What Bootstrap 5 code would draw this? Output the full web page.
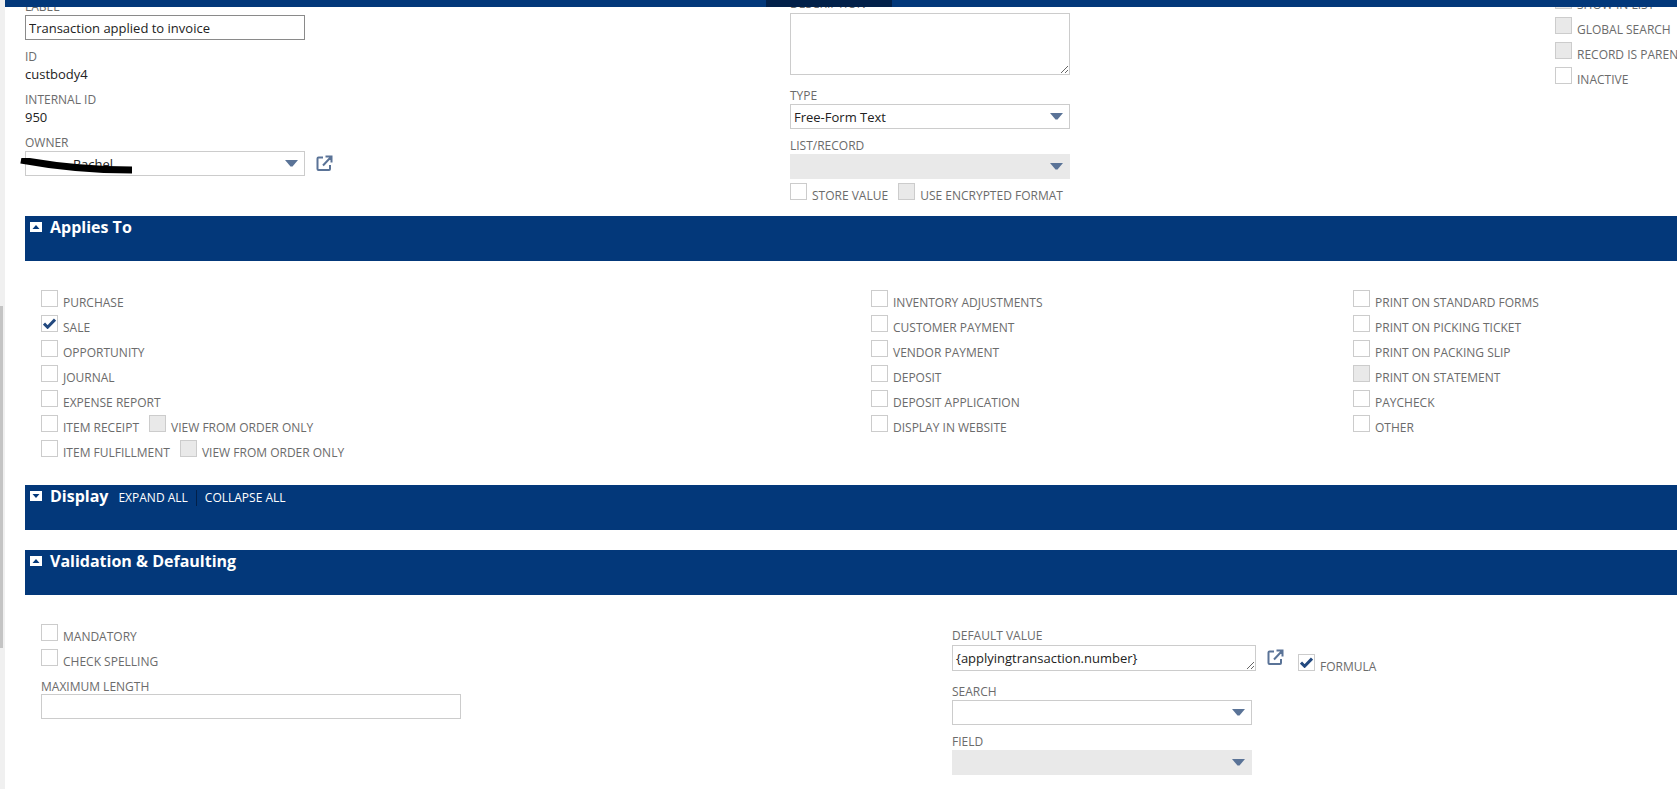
<!DOCTYPE html>
<html lang="en"><head>
<meta charset="UTF-8" />
<meta name="viewport" content="width=device-width, initial-scale=1" />
<title>Transaction Body Field</title>
<link href="https://cdn.jsdelivr.net/npm/bootstrap@5.3.3/dist/css/bootstrap.min.css" rel="stylesheet" />
<style>
  html, body { height: 100%; overflow: hidden; }
  body { font-family: "Open Sans", "Liberation Sans", sans-serif; font-size: 13px; color: #222; background: #fff; }
  .page-wrap { height: 789px; overflow: hidden; }
  .side-gutter { width: 5px; flex: none; background: #f0f0f0; }
  .side-thumb { width: 3px; height: 342px; margin-top: 306px; background: #c4c4c4; }
  .top-strip { position: relative; z-index: 2; height: 7px; background: #03387a; padding-left: 761px; }
  .top-tab { width: 126px; height: 7px; background: #022049; }
  .page-main { min-width: 0; flex: 1; overflow: hidden; }
  .top-fields { height: 216px; margin-top: -7px; padding-left: 20px; }
  .col-left { width: 765px; flex: none; }
  .col-mid { width: 765px; flex: none; margin-top: -2px; }
  .col-right { flex: none; margin-top: -8px; }
  .fld-label { display: block; height: 15px; margin: 0; font-size: 12px; line-height: 15px; color: #6b6b6b; text-transform: uppercase; white-space: nowrap; }
  .fld-value { height: 18px; line-height: 18px; margin: 1px 0 9px; }
  .fld-label.clip-one { margin: -1px 0 1px; }
  .fld-label.clip-two { margin: -2px 0 2px; }
  .fld-label.gap-a { margin-top: 9px; }
  .gap-owner { margin-top: 1px; }
  .fld-label.gap-type { margin: 13px 0 1px; }
  .fld-label.gap-list { margin: 9px 0 1px; }
  .gap-store { margin-top: 4px; }
  .ns-input.form-control, .ns-select.form-select { height: 25px; min-height: 25px; padding: 1px 3px 0; border: 1px solid #ccc; border-radius: 0; font-size: 13px; line-height: 22px; color: #222; box-shadow: none; }
  .ns-input.dark-edge { border-color: #8a8a8a; }
  .ns-select.form-select { background-image: url("data:image/svg+xml,%3Csvg xmlns='http://www.w3.org/2000/svg' width='13' height='7'%3E%3Cpath d='M0 0h13L7.5 6.5h-2z' fill='%235a7397'/%3E%3C/svg%3E"); background-size: 13px 7px; background-position: right 6px center; }
  .ns-select.form-select:disabled { background-color: #e9e9e9; border-color: #e9e9e9; }
  .ns-select.owner-select.form-select { padding-left: 47px; }
  textarea.ns-input.form-control { resize: both; }
  .w-280 { width: 280px; }
  .w-300 { width: 300px; }
  .w-304 { width: 304px; height: 26px !important; }
  .w-420 { width: 420px; }
  .desc-area.form-control { height: 62px; }
  .check-row { height: 25px; display: flex; align-items: flex-start; white-space: nowrap; }
  .ns-check.form-check-input { width: 17px; height: 17px; margin: 0; flex: none; border: 1px solid #ccc; border-radius: 0; background-color: #fff; box-shadow: none; }
  .ns-check.form-check-input:disabled { background-color: #e9e9e9; opacity: 1; }
  .ns-check.form-check-input:checked { background-color: #fff; border-color: #ccc; background-size: 13px 11px; background-image: url("data:image/svg+xml,%3Csvg xmlns='http://www.w3.org/2000/svg' viewBox='0 0 13 11'%3E%3Cpath d='M1 5.6l3.6 3.6L12 1.6' fill='none' stroke='%2323497f' stroke-width='3'/%3E%3C/svg%3E"); }
  .ns-check.after-text.form-check-input { margin-left: 10px; }
  .check-text { margin-left: 5px; margin-top: 5px; font-size: 12px; line-height: 15px; color: #6b6b6b; text-transform: uppercase; }
  .section-bar { height: 45px; margin-left: 20px; padding: 6px 0 0 5px; background: #03387a; color: #fff; }
  .bar-toggle { width: 12px; height: 10px; flex: none; }
  .bar-title { margin: 0 0 0 8px; font-size: 16px; font-weight: 700; line-height: 10px; white-space: nowrap; }
  .bar-title.has-links { margin-right: 10px; }
  .bar-link { margin-top: 2px; font-size: 12px; line-height: 10px; color: #fff; text-decoration: none; text-transform: uppercase; white-space: nowrap; }
  .bar-sep { width: 1px; height: 16px; margin: -1px 8px 0; background: #022049; }
  .applies-body { height: 224px; padding: 29px 0 0 36px; }
  .applies-one { width: 830px; flex: none; }
  .applies-two { width: 482px; flex: none; }
  .display-gap { height: 20px; }
  .valid-body { padding: 29px 0 0 36px; }
  .valid-left { width: 911px; flex: none; }
  .max-label { margin-top: 5px; }
  .valid-right { margin-top: 4px; }
  .default-row { height: 26px; margin-top: 2px; }
  .formula-row { margin: 9px 0 0 14px; }
  .link-icon { width: 17px; height: 17px; flex: none; margin-left: 11px; }
  .blackout { position: absolute; left: -7px; top: 7px; width: 118px; height: 18px; pointer-events: none; }
  .owner-wrap { position: relative; width: 280px; }
</style>
</head>
<body>
<div class="page-wrap d-flex">
  <div class="side-gutter"><div class="side-thumb"></div></div>
  <div class="page-main">
    <div class="top-strip"><div class="top-tab"></div></div>

    <div class="top-fields d-flex">
      <div class="col-left">
        <label class="fld-label clip-one">Label</label>
        <input class="form-control ns-input dark-edge w-280" type="text" value="Transaction applied to invoice" />
        <label class="fld-label gap-a">ID</label>
        <div class="fld-value">custbody4</div>
        <label class="fld-label">Internal ID</label>
        <div class="fld-value">950</div>
        <label class="fld-label">Owner</label>
        <div class="d-flex align-items-center gap-owner">
          <div class="owner-wrap">
            <select class="form-select ns-select owner-select w-280"><option>Rachel</option></select>
            <svg class="blackout" viewBox="0 0 118 18"><path d="M3 2C30 7 70 12 114 12" fill="none" stroke="#000" stroke-width="7" /></svg>
          </div>
          <svg class="link-icon" viewBox="0 0 17 17"><path d="M7 2.5H2.5a1 1 0 0 0-1 1V14a1 1 0 0 0 1 1H13a1 1 0 0 0 1-1V10M7 10.5L14.5 2.5M9.5 1.5H15.5V7.5" fill="none" stroke="#5a7397" stroke-width="2" /></svg>
        </div>
      </div>
      <div class="col-mid">
        <label class="fld-label clip-two">Description</label>
        <textarea class="form-control ns-input desc-area w-280"></textarea>
        <label class="fld-label gap-type">Type</label>
        <select class="form-select ns-select w-280"><option>Free-Form Text</option></select>
        <label class="fld-label gap-list">List/Record</label>
        <select class="form-select ns-select w-280" disabled><option></option></select>
        <div class="check-row gap-store">
          <input class="form-check-input ns-check" type="checkbox" /><span class="check-text">Store Value</span>
          <input class="form-check-input ns-check after-text" type="checkbox" disabled /><span class="check-text">Use Encrypted Format</span>
        </div>
      </div>
      <div class="col-right">
        <div class="check-row"><input class="form-check-input ns-check" type="checkbox" disabled /><span class="check-text">Show in List</span></div>
        <div class="check-row"><input class="form-check-input ns-check" type="checkbox" disabled /><span class="check-text">Global Search</span></div>
        <div class="check-row"><input class="form-check-input ns-check" type="checkbox" disabled /><span class="check-text">Record is Parent</span></div>
        <div class="check-row"><input class="form-check-input ns-check" type="checkbox" /><span class="check-text">Inactive</span></div>
      </div>
    </div>

    <div class="section-bar d-flex align-items-start">
      <svg class="bar-toggle" viewBox="0 0 12 10"><rect width="12" height="10" fill="#fff" /><path d="M2.5 7L6 3l3.5 4z" fill="#03387a" /></svg>
      <h2 class="bar-title">Applies To</h2>
    </div>
    <div class="applies-body d-flex">
      <div class="applies-one">
        <div class="check-row"><input class="form-check-input ns-check" type="checkbox" /><span class="check-text">Purchase</span></div>
        <div class="check-row"><input class="form-check-input ns-check" type="checkbox" checked /><span class="check-text">Sale</span></div>
        <div class="check-row"><input class="form-check-input ns-check" type="checkbox" /><span class="check-text">Opportunity</span></div>
        <div class="check-row"><input class="form-check-input ns-check" type="checkbox" /><span class="check-text">Journal</span></div>
        <div class="check-row"><input class="form-check-input ns-check" type="checkbox" /><span class="check-text">Expense Report</span></div>
        <div class="check-row"><input class="form-check-input ns-check" type="checkbox" /><span class="check-text">Item Receipt</span><input class="form-check-input ns-check after-text" type="checkbox" disabled /><span class="check-text">View From Order Only</span></div>
        <div class="check-row"><input class="form-check-input ns-check" type="checkbox" /><span class="check-text">Item Fulfillment</span><input class="form-check-input ns-check after-text" type="checkbox" disabled /><span class="check-text">View From Order Only</span></div>
      </div>
      <div class="applies-two">
        <div class="check-row"><input class="form-check-input ns-check" type="checkbox" /><span class="check-text">Inventory Adjustments</span></div>
        <div class="check-row"><input class="form-check-input ns-check" type="checkbox" /><span class="check-text">Customer Payment</span></div>
        <div class="check-row"><input class="form-check-input ns-check" type="checkbox" /><span class="check-text">Vendor Payment</span></div>
        <div class="check-row"><input class="form-check-input ns-check" type="checkbox" /><span class="check-text">Deposit</span></div>
        <div class="check-row"><input class="form-check-input ns-check" type="checkbox" /><span class="check-text">Deposit Application</span></div>
        <div class="check-row"><input class="form-check-input ns-check" type="checkbox" /><span class="check-text">Display in Website</span></div>
      </div>
      <div>
        <div class="check-row"><input class="form-check-input ns-check" type="checkbox" /><span class="check-text">Print on Standard Forms</span></div>
        <div class="check-row"><input class="form-check-input ns-check" type="checkbox" /><span class="check-text">Print on Picking Ticket</span></div>
        <div class="check-row"><input class="form-check-input ns-check" type="checkbox" /><span class="check-text">Print on Packing Slip</span></div>
        <div class="check-row"><input class="form-check-input ns-check" type="checkbox" disabled /><span class="check-text">Print on Statement</span></div>
        <div class="check-row"><input class="form-check-input ns-check" type="checkbox" /><span class="check-text">Paycheck</span></div>
        <div class="check-row"><input class="form-check-input ns-check" type="checkbox" /><span class="check-text">Other</span></div>
      </div>
    </div>

    <div class="section-bar d-flex align-items-start">
      <svg class="bar-toggle" viewBox="0 0 12 10"><rect width="12" height="10" fill="#fff" /><path d="M2.5 3L6 7l3.5-4z" fill="#03387a" /></svg>
      <h2 class="bar-title has-links">Display</h2>
      <a class="bar-link" href="#">Expand All</a>
      <span class="bar-sep"></span>
      <a class="bar-link" href="#">Collapse All</a>
    </div>
    <div class="display-gap"></div>

    <div class="section-bar d-flex align-items-start">
      <svg class="bar-toggle" viewBox="0 0 12 10"><rect width="12" height="10" fill="#fff" /><path d="M2.5 7L6 3l3.5 4z" fill="#03387a" /></svg>
      <h2 class="bar-title">Validation &amp; Defaulting</h2>
    </div>
    <div class="valid-body d-flex">
      <div class="valid-left">
        <div class="check-row"><input class="form-check-input ns-check" type="checkbox" /><span class="check-text">Mandatory</span></div>
        <div class="check-row"><input class="form-check-input ns-check" type="checkbox" /><span class="check-text">Check Spelling</span></div>
        <label class="fld-label max-label">Maximum Length</label>
        <input class="form-control ns-input w-420" type="text" />
      </div>
      <div class="valid-right">
        <label class="fld-label">Default Value</label>
        <div class="d-flex align-items-start default-row">
          <textarea class="form-control ns-input w-304">{applyingtransaction.number}</textarea>
          <svg class="link-icon mt-1" viewBox="0 0 17 17"><path d="M7 2.5H2.5a1 1 0 0 0-1 1V14a1 1 0 0 0 1 1H13a1 1 0 0 0 1-1V10M7 10.5L14.5 2.5M9.5 1.5H15.5V7.5" fill="none" stroke="#5a7397" stroke-width="2" /></svg>
          <div class="check-row formula-row"><input class="form-check-input ns-check" type="checkbox" checked /><span class="check-text">Formula</span></div>
        </div>
        <label class="fld-label gap-type">Search</label>
        <select class="form-select ns-select w-300"><option></option></select>
        <label class="fld-label gap-list">Field</label>
        <select class="form-select ns-select w-300" disabled><option></option></select>
      </div>
    </div>
  </div>
</div>
<script src="https://cdn.jsdelivr.net/npm/bootstrap@5.3.3/dist/js/bootstrap.bundle.min.js"></script>
</body></html>
